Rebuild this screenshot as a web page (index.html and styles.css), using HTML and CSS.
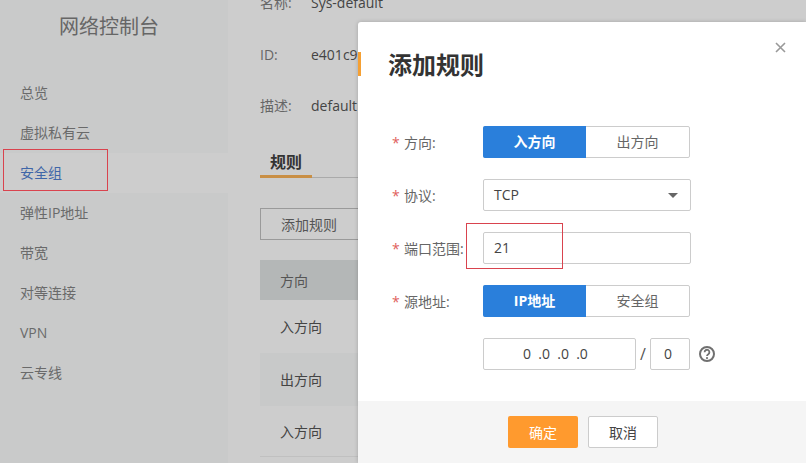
FILE: index.html
```html
<!DOCTYPE html>
<html lang="zh-CN">
<head>
    <meta charset="UTF-8">
    <title>添加规则</title>
    <link rel="stylesheet" href="styles.css">
</head>
<body>
    <div class="page">
        <div class="sidebar">
            <div class="side-title">网络控制台</div>
            <div class="side-menu">
                <div class="side-item">总览</div>
                <div class="side-item">虚拟私有云</div>
                <div class="side-item active">安全组</div>
                <div class="side-item">弹性IP地址</div>
                <div class="side-item">带宽</div>
                <div class="side-item">对等连接</div>
                <div class="side-item">VPN</div>
                <div class="side-item">云专线</div>
            </div>
        </div>

        <div class="main">
            <div class="info-row"><span class="info-label">名称:</span><span>Sys-default</span></div>
            <div class="info-row"><span class="info-label">ID:</span><span>e401c9</span></div>
            <div class="info-row"><span class="info-label">描述:</span><span>default</span></div>
            <div class="tabs"><span class="tab">规则</span></div>
            <button class="add-btn">添加规则</button>
            <div class="rule-table">
                <div class="rule-head">方向</div>
                <div class="rule-row">入方向</div>
                <div class="rule-row alt">出方向</div>
                <div class="rule-row last">入方向</div>
            </div>
        </div>
    </div>

    <!-- dialog -->
    <div class="modal">
        <div class="modal-mark"></div>
        <svg class="modal-close" width="11" height="11" viewBox="0 0 11 11"><path d="M1 1l9 9M10 1l-9 9" stroke="#999" stroke-width="1.6" fill="none"/></svg>
        <div class="modal-title">添加规则</div>

        <div class="form">
            <div class="form-row">
                <label class="form-label"><span class="star">*</span>方向:</label>
                <div class="seg">
                    <div class="seg-item on">入方向</div>
                    <div class="seg-item">出方向</div>
                </div>
            </div>
            <div class="form-row">
                <label class="form-label"><span class="star">*</span>协议:</label>
                <div class="field select">TCP<span class="caret"></span></div>
            </div>
            <div class="form-row">
                <label class="form-label"><span class="star">*</span>端口范围:</label>
                <div class="field">21</div>
            </div>
            <div class="form-row">
                <label class="form-label"><span class="star">*</span>源地址:</label>
                <div class="seg">
                    <div class="seg-item on">IP地址</div>
                    <div class="seg-item">安全组</div>
                </div>
            </div>
            <div class="form-row">
                <div class="form-label"></div>
                <div class="field ip">0&nbsp;&nbsp;.0&nbsp;&nbsp;.0&nbsp;&nbsp;.0</div>
                <span class="slash">/</span>
                <div class="field mask">0</div>
                <svg class="help" width="18" height="18" viewBox="0 0 18 18">
                    <circle cx="9" cy="9" r="7" stroke="#707070" stroke-width="2" fill="none"/>
                    <path d="M6.6 7.2a2.4 2.4 0 1 1 3.7 2c-.9.6-1.3 1-1.3 1.9" stroke="#707070" stroke-width="1.8" fill="none"/>
                    <circle cx="9" cy="13.1" r="1.1" fill="#707070"/>
                </svg>
            </div>
        </div>

        <div class="modal-foot">
            <button class="btn-ok">确定</button>
            <button class="btn-cancel">取消</button>
        </div>
    </div>

    <!-- red marks drawn over the screenshot -->
    <div class="mark mark-menu"></div>
    <div class="mark mark-port"></div>
</body>
</html>
```

FILE: styles.css
```css
html, body {
    margin: 0;
    height: 100%;
    overflow: hidden;
}
body {
    font-family: "Open Sans", "Noto Sans CJK SC", sans-serif;
    font-size: 14px;
    color: #333;
    background-color: #ccc;
}
button {
    font-family: inherit;
    font-size: 14px;
}
.page {
    display: flex;
    height: 463px;
}
.sidebar {
    width: 228px;
    flex-shrink: 0;
    background-color: #c9caca;
    color: #6a6a6a;
}
.side-title {
    height: 73px;
    padding-top: 11px;
    padding-right: 10px;
    box-sizing: border-box;
    text-align: center;
    font-size: 20px;
    line-height: 32px;
    color: #666;
}
.side-item {
    height: 40px;
    line-height: 40px;
    padding-left: 20px;
}
.side-item.active {
    color: #3f66a8;
    background-color: #cdcdcd;
}
.main {
    flex: 1;
    padding: 0 0 0 32px;
    background-color: #cdcdcd;
    color: #444;
}
.info-row {
    display: flex;
    height: 51.5px;
    line-height: 24px;
    color: #444;
}
.info-row:first-child {
    margin-top: -9px;
}
.info-label {
    width: 51px;
    color: #666;
}
.tabs {
    height: 32px;
    border-bottom: 1px solid #aaa;
    box-sizing: border-box;
}
.tab {
    display: inline-block;
    width: 52px;
    height: 32px;
    box-sizing: border-box;
    padding-left: 10px;
    font-size: 16px;
    font-weight: bold;
    line-height: 32px;
    color: #333;
    border-bottom: 3px solid #c98f45;
}
.add-btn {
    display: block;
    width: 110px;
    height: 32px;
    margin-top: 30px;
    padding: 0 0 0 20px;
    text-align: left;
    background-color: #cdcdcd;
    border: 1px solid #9a9a9a;
    color: #555;
}
.rule-table {
    margin-top: 20px;
}
.rule-head {
    height: 40px;
    line-height: 42px;
    padding-left: 20px;
    background-color: #b4b7b7;
    color: #555;
}
.rule-row {
    height: 53px;
    line-height: 53px;
    padding-left: 20px;
    box-sizing: border-box;
}
.rule-row.alt {
    background-color: #c8c9c9;
}
.rule-row.last {
    height: 51px;
    line-height: 51px;
    border-bottom: 1px solid #c0c0c0;
}

/* dialog */
.modal {
    position: absolute;
    left: 358px;
    top: 22px;
    width: 448px;
    height: 441px;
    display: flex;
    flex-direction: column;
    background-color: #fff;
    border-radius: 3px 0 0 0;
    box-shadow: 0 0 4px rgba(0, 0, 0, 0.2);
}
.modal-mark {
    position: absolute;
    left: 0;
    top: 30px;
    width: 3px;
    height: 24px;
    background-color: #f5a033;
}
.modal-close {
    position: absolute;
    right: 20px;
    top: 20px;
}
.modal-title {
    margin: 25px 0 0 30px;
    height: 36px;
    font-size: 24px;
    font-weight: bold;
    line-height: 36px;
    color: #333;
}
.form {
    flex: 1;
    padding-top: 43px;
}
.form-row {
    display: flex;
    align-items: center;
    height: 32px;
    margin-bottom: 21px;
}
.form-label {
    width: 125px;
    flex-shrink: 0;
    padding-left: 34px;
    box-sizing: border-box;
    white-space: nowrap;
    color: #666;
}
.star {
    display: inline-block;
    width: 12px;
    color: #e0605c;
}
.seg {
    display: flex;
    width: 207px;
    height: 32px;
    box-sizing: border-box;
    border: 1px solid #ccc;
    border-radius: 2px;
}
.seg-item {
    flex: 1;
    text-align: center;
    line-height: 30px;
    color: #666;
}
.seg-item.on {
    margin: -1px 0 -1px -1px;
    flex: none;
    width: 103px;
    line-height: 32px;
    background-color: #2a7fdb;
    color: #fff;
    font-weight: bold;
    border-radius: 2px 0 0 2px;
}
.field {
    width: 208px;
    height: 32px;
    box-sizing: border-box;
    padding-left: 10px;
    border: 1px solid #ccc;
    border-radius: 2px;
    line-height: 30px;
    color: #444;
}
.select {
    position: relative;
}
.caret {
    position: absolute;
    right: 12px;
    top: 13px;
    border-left: 5px solid transparent;
    border-right: 5px solid transparent;
    border-top: 5px solid #666;
}
.ip {
    width: 153px;
    padding-left: 39px;
}
.slash {
    width: 14px;
    text-align: center;
    font-size: 16px;
    color: #555;
}
.mask {
    width: 40px;
    padding-left: 0;
    text-align: center;
    padding-right: 4px;
}
.help {
    margin-left: 8px;
}
.modal-foot {
    display: flex;
    justify-content: center;
    gap: 10px;
    height: 62px;
    box-sizing: border-box;
    padding: 15px 0 0 2px;
    background-color: #f5f5f5;
}
.btn-ok, .btn-cancel {
    width: 70px;
    height: 32px;
    padding: 0;
    border-radius: 2px;
}
.btn-ok {
    background-color: #ff9a2e;
    border: 0;
    color: #fff;
}
.btn-cancel {
    background-color: #fff;
    border: 1px solid #ccc;
    color: #444;
}

/* annotations */
.mark {
    position: absolute;
    box-sizing: border-box;
    border: 1px solid #d9434e;
}
.mark-menu {
    left: 3px;
    top: 149px;
    width: 105px;
    height: 42px;
}
.mark-port {
    left: 466px;
    top: 223px;
    width: 97px;
    height: 46px;
}
```
